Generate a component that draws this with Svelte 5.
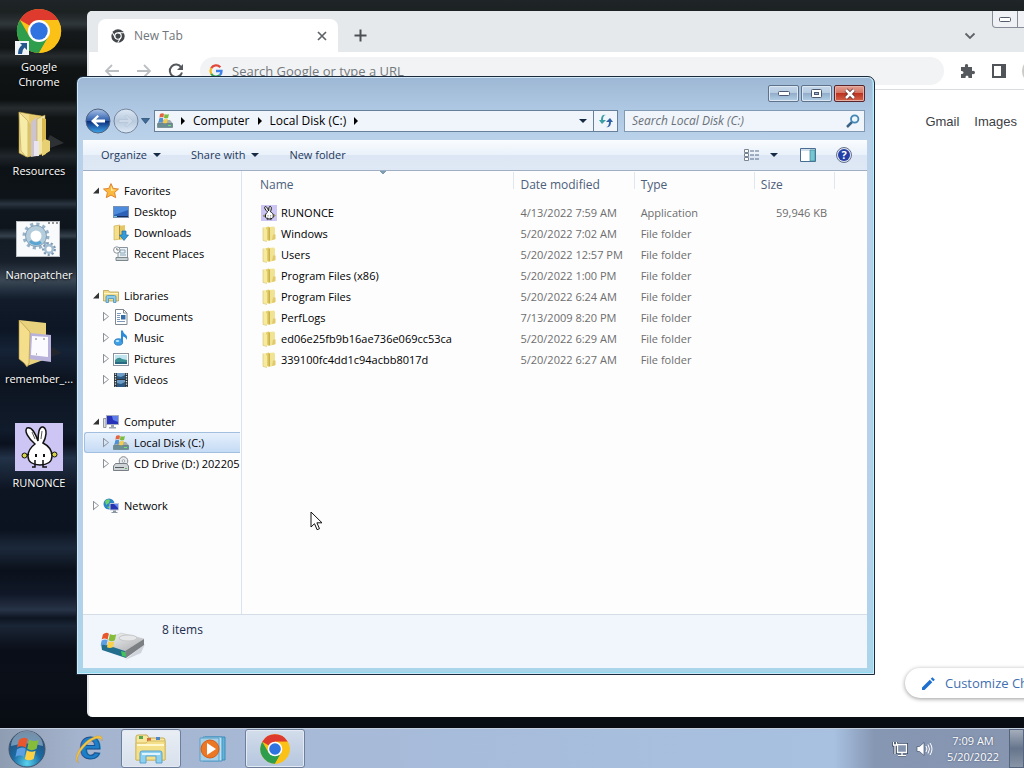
<script lang="ts">
  type Entry = { name: string; date: string; type: string; size?: string; icon: string };
  type Node = { label: string; icon: string; closed?: boolean; selected?: boolean };
  type Group = { label: string; icon: string; closed?: boolean; items: Node[] };

  const shortcuts = [
    { label: 'Google Chrome', icon: 'chrome', link: true },
    { label: 'Resources', icon: 'folder-full' },
    { label: 'Nanopatcher', icon: 'gears' },
    { label: 'remember_...', icon: 'folder-doc' },
    { label: 'RUNONCE', icon: 'bunny' }
  ];

  const groups: Group[] = [
    {
      label: 'Favorites',
      icon: 'star',
      items: [
        { label: 'Desktop', icon: 'desktop' },
        { label: 'Downloads', icon: 'downloads' },
        { label: 'Recent Places', icon: 'recent' }
      ]
    },
    {
      label: 'Libraries',
      icon: 'libraries',
      items: [
        { label: 'Documents', icon: 'document', closed: true },
        { label: 'Music', icon: 'music', closed: true },
        { label: 'Pictures', icon: 'picture', closed: true },
        { label: 'Videos', icon: 'video', closed: true }
      ]
    },
    {
      label: 'Computer',
      icon: 'computer',
      items: [
        { label: 'Local Disk (C:)', icon: 'disk', closed: true, selected: true },
        { label: 'CD Drive (D:) 202205', icon: 'cd', closed: true }
      ]
    },
    { label: 'Network', icon: 'network', closed: true, items: [] }
  ];

  const entries: Entry[] = [
    { name: 'RUNONCE', date: '4/13/2022 7:59 AM', type: 'Application', size: '59,946 KB', icon: 'bunny' },
    { name: 'Windows', date: '5/20/2022 7:02 AM', type: 'File folder', icon: 'folder' },
    { name: 'Users', date: '5/20/2022 12:57 PM', type: 'File folder', icon: 'folder' },
    { name: 'Program Files (x86)', date: '5/20/2022 1:00 PM', type: 'File folder', icon: 'folder' },
    { name: 'Program Files', date: '5/20/2022 6:24 AM', type: 'File folder', icon: 'folder' },
    { name: 'PerfLogs', date: '7/13/2009 8:20 PM', type: 'File folder', icon: 'folder' },
    { name: 'ed06e25fb9b16ae736e069cc53ca', date: '5/20/2022 6:29 AM', type: 'File folder', icon: 'folder' },
    { name: '339100fc4dd1c94acbb8017d', date: '5/20/2022 6:27 AM', type: 'File folder', icon: 'folder' }
  ];

  let search = $state('');
</script>

{#snippet icon(name: string, size: number)}
  {#if name === 'chrome'}
    <svg width={size} height={size} viewBox="0 0 48 48" aria-hidden="true">
      <circle cx="24" cy="24" r="22" fill="#fbc116" />
      <path d="M24 24 4.9 13A22 22 0 0 1 43.1 13H24z" fill="#de3a2e" />
      <path d="M4.9 13A22 22 0 0 0 24 46L33.5 29.5 24 24 14.5 29.5z" fill="#2f9e4c" />
      <path d="M24 13H43.1A22 22 0 0 1 24 46L33.5 29.5z" fill="#fbc116" />
      <circle cx="24" cy="24" r="11" fill="#fff" />
      <circle cx="24" cy="24" r="8.7" fill="#2f73e0" />
    </svg>
  {:else if name === 'folder-full'}
    <svg width={size} height={size} viewBox="0 0 48 48" aria-hidden="true">
      <path d="M27 40l22-8-14-8z" fill="#2d3133" />
      <path d="M4 1l22 4v38l-14 3L4 42z" fill="#f0dc8e" stroke="#a58c38" stroke-width=".6" />
      <path d="M14 4l16 1v38l-14 2z" fill="#e6ca6c" />
      <path d="M16 11l6-5v39l-6 1z" fill="#cdc3cc" />
      <path d="M22 8l8-4v37l-8 4z" fill="#f3e6a4" stroke="#b49b46" stroke-width=".5" />
      <path d="M27 7l4 1v35l-4 2z" fill="#d8b94e" />
      <path d="M19 30h5v15h-5z" fill="#e9e4ef" />
      <path d="M30 28l5 2v10l-8 5V31z" fill="#e7cf73" />
      <path d="M4 1l9 9v36l-3-1-2-3-2-2z" fill="#f7eba8" stroke="#b8a14f" stroke-width=".6" />
      <path d="M13 10l3 4v31l-3 1z" fill="#dcc266" />
    </svg>
  {:else if name === 'folder-doc'}
    <svg width={size} height={size} viewBox="0 0 48 48" aria-hidden="true">
      <path d="M22 43l25-9-10-6z" fill="#22252b" />
      <path d="M4 1l27 3v36l-19 7z" fill="#e9d27d" />
      <path d="M15 14l21 2v27l-22-3z" fill="#b9b3dc" />
      <path d="M17 17l16 1v20l-17-2z" fill="#fbfaff" />
      <path d="M4 1l11 12-1 31-2 4-3-4-5-4z" fill="#f4dd8b" stroke="#a98f3e" stroke-width=".6" />
      <path d="M20 20h2M28 20h2M21 35h1" stroke="#777" />
    </svg>
  {:else if name === 'gears'}
    <svg width={size} height={size} viewBox="0 0 48 48" aria-hidden="true">
      <rect x="1.5" y="6.5" width="43" height="35" fill="#f8fafb" stroke="#b9bcc0" />
      <path d="M33 8h2M37 8h2M41 8h2" stroke="#333" />
      <circle cx="21" cy="21" r="11.5" fill="none" stroke="#98b3c8" stroke-width="4" stroke-dasharray="3 3.02" />
      <circle cx="21" cy="21" r="8" fill="#fff" stroke="#b4cddd" stroke-width="5" />
      <circle cx="21" cy="21" r="10.5" fill="none" stroke="#6f8ca6" stroke-width=".7" />
      <path d="M15 26a8 8 0 0 0 11 1" fill="none" stroke="#5ba5d3" stroke-width="3" />
      <circle cx="34" cy="34" r="5.4" fill="none" stroke="#7d98b2" stroke-width="3" stroke-dasharray="2 1.77" />
      <circle cx="34" cy="34" r="3.8" fill="#fff" stroke="#a3bdd2" stroke-width="2.5" />
    </svg>
  {:else if name === 'bunny'}
    <svg width={size} height={size} viewBox="0 0 48 48" aria-hidden="true">
      <rect width="48" height="48" fill="#cdc5f4" />
      <path d="M20 21C13 15 9 8 12 5c5-2 9 7 11 13 0-7 1-15 5-14 5 2 3 11 0 16 6 3 9 7 9 13s-5 9-12 9-12-3-12-9c0-5 3-9 7-12z" fill="#fff" stroke="#111" stroke-width={size > 20 ? 1.5 : 3} />
      <path d="M17 9l3 7M27 8l-1 8" stroke="#555" />
      <path d="M21 31v3M29 31v3" stroke="#111" stroke-width="2" />
      <path d="M20 37v7h-3M28 37v7h4" fill="none" stroke="#111" stroke-width="1.5" />
      <path d="M14 31l-3 2M36 30l3 2" stroke="#111" stroke-width="1.5" />
      <circle cx="9.5" cy="32.5" r="2.5" fill="#d6d345" stroke="#111" />
      <circle cx="39.5" cy="31.5" r="2.5" fill="#d6d345" stroke="#111" />
    </svg>
  {:else if name === 'folder'}
    <svg width={size} height={size} viewBox="0 0 16 16" aria-hidden="true">
      <path d="M2 1.5l6-1v14l-6 .5z" fill="#f7eeb4" />
      <path d="M5 1.5l3-1v13l-3 1z" fill="#e3cf70" />
      <path d="M8 1l5-.5 1 1v12L8 15z" fill="#f1e394" />
      <path d="M7.500 1.500H9V14l-1.500 1z" fill="#cbb04a" />
      <path d="M2 1.500l4 2V15.500l-4-1z" fill="#f6ea9c" />
      <path d="M12 8.500h2.500v4.500L11 14z" fill="#e2ca6b" />
      <path d="M2 1.500V14.500l4 1" fill="none" stroke="#d5c47a" stroke-width=".6" />
    </svg>
  {:else if name === 'star'}
    <svg width={size} height={size} viewBox="0 0 16 16" aria-hidden="true">
      <path d="M8 .6l2.2 4.8 5.300.6-3.900 3.500 1.100 5.200L8 12.100l-4.700 2.600 1.100-5.200L.5 6l5.300-.6z" fill="#fbb93e" stroke="#d97d28" stroke-width=".9" />
      <path d="M8 3l1.400 3.500L13 7 8 8z" fill="#fff0a6" />
    </svg>
  {:else if name === 'desktop'}
    <svg width={size} height={size} viewBox="0 0 16 16" aria-hidden="true">
      <rect x=".5" y="2.5" width="15" height="11" fill="#2b62b8" stroke="#7790b3" />
      <path d="M1 3h14v3L1 11z" fill="#4d8cdc" />
      <path d="M1 12h14v1H1z" fill="#172d55" />
      <path d="M1 12h3v1H1z" fill="#75c2e4" />
    </svg>
  {:else if name === 'downloads'}
    <svg width={size} height={size} viewBox="0 0 16 16" aria-hidden="true">
      <path d="M1 1l6-1v14l-6 1z" fill="#f3df8c" stroke="#c6a84b" stroke-width=".6" />
      <path d="M6 1l6-1v14l-6 1z" fill="#e5c866" />
      <path d="M6 1h1v13H6z" fill="#b3923a" />
      <path d="M9 6h4v4h2.500L11 15.500 6.500 10H9z" fill="#359bd6" stroke="#1c6ea8" stroke-width=".7" />
    </svg>
  {:else if name === 'recent'}
    <svg width={size} height={size} viewBox="0 0 16 16" aria-hidden="true">
      <path d="M5 1.500h9.500v11H5z" fill="#eef2f5" stroke="#8a949c" />
      <path d="M7 4h5v3H7zM7 9h6" fill="none" stroke="#86a5ba" />
      <path d="M3 11.500h12v3H3z" fill="#cbd2d6" stroke="#7d878e" />
      <circle cx="3.8" cy="4" r="3.2" fill="#fff" stroke="#8a949c" />
      <path d="M3.800 2v2h2" fill="none" stroke="#555" stroke-width=".8" />
    </svg>
  {:else if name === 'libraries'}
    <svg width={size} height={size} viewBox="0 0 16 16" aria-hidden="true">
      <path d="M.5 13V2.500h5l1 1.500h9v9z" fill="#f1dc8b" stroke="#b99f4e" stroke-width=".8" />
      <path d="M1 5.500h14" stroke="#fff5c4" />
      <path d="M3 14.500V9q0-1.500 1.500-1.500h7Q13 7.500 13 9v5.500h-2.500v-4h-5v4z" fill="#8ccbea" stroke="#4d8fb5" stroke-width=".8" />
    </svg>
  {:else if name === 'document'}
    <svg width={size} height={size} viewBox="0 0 16 16" aria-hidden="true">
      <path d="M2.500.5h8l3.500 3.500v11.500H2.500z" fill="#fff" stroke="#7f8890" />
      <path d="M10.500.5V4H14" fill="none" stroke="#7f8890" />
      <path d="M4 4.500h4M4 6.500h3M4 8.500h3M4 10.500h3M4 12.500h8" stroke="#7b98bc" />
      <path d="M8 6h4.500v4.500H8z" fill="#356da8" />
    </svg>
  {:else if name === 'music'}
    <svg width={size} height={size} viewBox="0 0 16 16" aria-hidden="true">
      <ellipse cx="5.5" cy="12" rx="4.2" ry="3.3" fill="#3fa0e4" stroke="#1d6ab2" stroke-width=".7" />
      <path d="M8 .5h1.800q.4 3 3.200 4.500 2 2 .4 5-.2-2.600-3.400-3.500V12H8z" fill="#2d8bd6" />
      <ellipse cx="4.5" cy="11" rx="1.8" ry="1" fill="#c2e8ff" />
    </svg>
  {:else if name === 'picture'}
    <svg width={size} height={size} viewBox="0 0 16 16" aria-hidden="true">
      <rect x=".5" y="2.5" width="15" height="12" fill="#fff" stroke="#8b949c" />
      <path d="M2 4h12v9H2z" fill="#bfe4ef" />
      <path d="M2 9q4-4 7-1l5 1v4H2z" fill="#3b8e92" />
      <path d="M2 11h12v2H2z" fill="#286a83" />
    </svg>
  {:else if name === 'video'}
    <svg width={size} height={size} viewBox="0 0 16 16" aria-hidden="true">
      <path d="M1 1h14v14H1z" fill="#2d3439" />
      <path d="M4 1h8v6H4zM4 8h8v7H4z" fill="#6d9cc8" />
      <path d="M4 4l4 1 4-2v4H4zM4 11l4 1 4-2v5H4z" fill="#2b5885" />
      <path d="M2.500 1.500v13M13.500 1.500v13" stroke="#e8edf0" stroke-width="1.3" stroke-dasharray="1.3 1.2" />
    </svg>
  {:else if name === 'computer'}
    <svg width={size} height={size} viewBox="0 0 16 16" aria-hidden="true">
      <path d="M.5 4.500H3v9H.5z" fill="#d9dde2" stroke="#7c858c" stroke-width=".8" />
      <path d="M3.500 1.500h12v9h-12z" fill="#2633b8" stroke="#a2abc0" />
      <path d="M9 2h6v6l-5-2z" fill="#5e7bea" />
      <path d="M8 11h3v2h2v1.500H6V13h2z" fill="#9aa3ae" />
    </svg>
  {:else if name === 'disk'}
    <svg width={size} height={size} viewBox="0 0 16 16" aria-hidden="true">
      <path d="M1 9l2-2h10l2.500 3v4H1z" fill="#a3adaf" />
      <path d="M.5 10.500h15v4H.5z" fill="#6b8d94" stroke="#5b757b" stroke-width=".6" />
      <path d="M11 12.500h3" stroke="#71e071" />
      <path d="M3 1q2-1.500 4-.3L6.400 4.500q-2-1-4 .2z" fill="#e2653f" />
      <path d="M7.500 1q2 1.200 4.500 0L11 5q-2 .8-4 0z" fill="#7bbb3d" />
      <path d="M2.200 5.500q2-1.200 4-.2L5.500 9.500q-2-1-4 .2z" fill="#4d91d8" />
      <path d="M6.700 5.700q2 1 4.200.1L10 10q-2 .7-4 0z" fill="#f5cd4c" />
    </svg>
  {:else if name === 'cd'}
    <svg width={size} height={size} viewBox="0 0 16 16" aria-hidden="true">
      <circle cx="10.5" cy="5" r="4.3" fill="#e8ebed" stroke="#82898f" />
      <circle cx="10.5" cy="5" r="1.3" fill="#fff" stroke="#82898f" stroke-width=".7" />
      <path d="M.5 10l2-2.500h11l2 2.500v4.500H.5z" fill="#cfd4d7" stroke="#6c7378" stroke-width=".9" />
      <path d="M2 11.500h9" stroke="#555c61" />
      <path d="M12 12.500h2" stroke="#67b567" />
    </svg>
  {:else if name === 'network'}
    <svg width={size} height={size} viewBox="0 0 16 16" aria-hidden="true">
      <circle cx="6" cy="6" r="5.5" fill="#2c85c5" />
      <path d="M2 3q3-3 5-1L6 5 3 7zM4 9l4-1-1 3z" fill="#6ed068" />
      <path d="M7 5.500h8.500v6.500H7z" fill="#2535b0" stroke="#bfc8d8" />
      <path d="M11 6h4v4z" fill="#6a87ef" />
      <path d="M10 12.500h3v1.500h1.500v1H8.500v-1H10z" fill="#8d97a4" />
    </svg>
  {/if}
{/snippet}

{#snippet flag()}
  <path d="M3 5q5-4 9-1l-2 9q-5-3-9 0z" fill="#e6572d" />
  <path d="M13.500 4.500q5 3 9.500.5l-2 9q-5 3-9.500 0z" fill="#85bd3b" />
  <path d="M1 14.500q5-3 9-.5l-2 8.500q-4-3-8.500 0z" fill="#5c9fe2" />
  <path d="M11 15.500q5 3 9 .5l-2 8.500q-5 2.500-9 0z" fill="#fbd045" />
{/snippet}

<div class="screen">
  <main class="desktop">
    <ul class="shortcuts">
      {#each shortcuts as item}
        <li>
          <button class="shortcut">
            <span class="shortcut-icon">
              {@render icon(item.icon, 48)}
              {#if item.link}
                <svg class="link-badge" width="14" height="14" viewBox="0 0 14 14" aria-hidden="true">
                  <path d="M0 0h14v14H0z" fill="#f2f5f8" />
                  <path d="M5 2h7v7L9.500 6.500Q7 9 7 13H3q0-6 4-9z" fill="#25588f" />
                </svg>
              {/if}
            </span>
            {item.label}
          </button>
        </li>
      {/each}
    </ul>

    <section class="browser" aria-label="New Tab">
      <div class="tab-strip">
        <div class="tab">
          <svg width="14" height="14" viewBox="0 0 48 48" aria-hidden="true">
            <circle cx="24" cy="24" r="23" fill="#42464a" />
            <circle cx="24" cy="24" r="11" fill="none" stroke="#fff" stroke-width="4" />
            <path d="M24 13h21M33.500 29.500L23 47M14.500 29.500L4 11" stroke="#fff" stroke-width="3.5" />
          </svg>
          <span class="tab-title">New Tab</span>
          <button class="bare" aria-label="Close tab">
            <svg width="10" height="10" viewBox="0 0 10 10"><path d="M1 1l8 8M9 1L1 9" stroke="#5f6368" stroke-width="1.7" /></svg>
          </button>
        </div>
        <button class="bare strip-btn" aria-label="New tab">
          <svg width="13" height="13" viewBox="0 0 13 13"><path d="M6.500.5v12M.5 6.500h12" stroke="#4c5054" stroke-width="2" /></svg>
        </button>
        <button class="bare strip-btn tab-search" aria-label="Search tabs">
          <svg width="12" height="8" viewBox="0 0 12 8"><path d="M1.500 1.500L6 6l4.500-4.500" fill="none" stroke="#5f6368" stroke-width="1.8" /></svg>
        </button>
        <button class="browser-min" aria-label="Minimize browser">
          <svg width="12" height="5" viewBox="0 0 12 5"><rect x=".5" y=".5" width="11" height="4" rx="1" fill="#fff" stroke="#555d6b" /></svg>
        </button>
      </div>
      <div class="browser-bar">
        <button class="bare" aria-label="Back">
          <svg width="16" height="14" viewBox="0 0 16 14"><path d="M15 7H2M8 1L2 7l6 6" fill="none" stroke="#bcbfc2" stroke-width="1.8" /></svg>
        </button>
        <button class="bare" aria-label="Forward">
          <svg width="16" height="14" viewBox="0 0 16 14"><path d="M1 7h13M8 1l6 6-6 6" fill="none" stroke="#bcbfc2" stroke-width="1.8" /></svg>
        </button>
        <button class="bare" aria-label="Reload">
          <svg width="16" height="16" viewBox="0 0 16 16"><path d="M13.300 4.500A6.200 6.200 0 1 0 14 9.500" fill="none" stroke="#55595d" stroke-width="2" /><path d="M15 1v6H9z" fill="#55595d" /></svg>
        </button>
        <div class="omnibox">
          <svg width="14" height="14" viewBox="0 0 14 14" fill="none" stroke-width="2.3" aria-hidden="true">
            <path d="M11.300 3.200A5.600 5.600 0 0 0 2.200 4.300" stroke="#e2473b" />
            <path d="M2.200 4.300a5.600 5.600 0 0 0 0 5.400" stroke="#f4b91d" />
            <path d="M2.200 9.700a5.600 5.600 0 0 0 8.600 1.500" stroke="#3ba255" />
            <path d="M10.800 11.200Q12.600 9.500 12.500 7H7" stroke="#4080ea" />
          </svg>
          <input type="text" aria-label="Address and search bar" placeholder="Search Google or type a URL" />
        </div>
        <button class="bare" aria-label="Extensions">
          <svg width="16" height="16" viewBox="0 0 16 16"><path d="M1 4h4q-.6-3 1.500-3T8 4h4v4q3-.6 3 1.500T12 11v4H8.500q.3-2.500-1.500-2.500T5.500 15H1v-4q2.500.3 2.500-1.500T1 8z" fill="#55595d" /></svg>
        </button>
        <button class="bare" aria-label="Side panel">
          <svg width="14" height="14" viewBox="0 0 14 14"><path d="M1 1h12v12H1z" fill="#fff" stroke="#505458" stroke-width="2" /><path d="M9 1h4v12H9z" fill="#505458" /></svg>
        </button>
        <span class="avatar"></span>
      </div>
      <nav class="google-links">
        <a href="#gmail">Gmail</a>
        <a href="#images">Images</a>
      </nav>
      <button class="customize">
        <svg width="13" height="13" viewBox="0 0 13 13" aria-hidden="true"><path d="M0 10.500L7.800 2.700l2.500 2.500L2.500 13H0zM8.700 1.800L10.400.2l2.500 2.500-1.700 1.600z" fill="#1f6fd0" /></svg>
        Customize Chrome
      </button>
    </section>

    <section class="explorer" aria-label="Local Disk (C:)">
      <header class="title-bar">
        <button class="win-btn" aria-label="Minimize">
          <svg width="12" height="5" viewBox="0 0 12 5"><rect x=".5" y=".5" width="11" height="4" rx="1" fill="#fff" stroke="#4b5a70" /></svg>
        </button>
        <button class="win-btn" aria-label="Maximize">
          <svg width="11" height="9" viewBox="0 0 11 9"><rect x=".5" y=".5" width="10" height="8" rx="1" fill="#fff" stroke="#4b5a70" /><rect x="3.5" y="3.5" width="4" height="2" fill="#9db6d0" stroke="#4b5a70" /></svg>
        </button>
        <button class="win-btn close" aria-label="Close">
          <svg width="12" height="10" viewBox="0 0 12 10"><path d="M2 1l8 8M10 1L2 9" stroke="#5a2a2a" stroke-width="4" /><path d="M2 1l8 8M10 1L2 9" stroke="#fff" stroke-width="2.5" /></svg>
        </button>
      </header>

      <div class="nav-bar">
        <div class="history">
          <button class="orb" aria-label="Back">
            <svg width="26" height="26" viewBox="0 0 26 26">
              <defs>
                <linearGradient id="back" x2="0" y2="1"><stop stop-color="#a9c2e6" /><stop offset=".48" stop-color="#2f5fae" /><stop offset=".52" stop-color="#0c2f80" /><stop offset="1" stop-color="#3fa6ea" /></linearGradient>
              </defs>
              <circle cx="13" cy="13" r="12" fill="url(#back)" stroke="#51617c" />
              <path d="M6 13l6.500-6 1.500 1.500-3 3H20v3h-9l3 3-1.500 1.500z" fill="#fff" />
            </svg>
          </button>
          <button class="orb" aria-label="Forward">
            <svg width="26" height="26" viewBox="0 0 26 26">
              <defs>
                <linearGradient id="fwd" x2="0" y2="1"><stop stop-color="#dce7f3" /><stop offset=".5" stop-color="#b8cade" /><stop offset="1" stop-color="#dbe8f5" /></linearGradient>
              </defs>
              <circle cx="13" cy="13" r="12" fill="url(#fwd)" stroke="#76869c" />
              <path d="M20 13l-6.500-6-1.500 1.500 3 3H6v3h9l-3 3 1.500 1.500z" fill="#cbd9e8" stroke="#b0c0d3" stroke-width=".6" />
            </svg>
          </button>
          <button class="bare" aria-label="Recent pages">
            <svg width="9" height="6" viewBox="0 0 9 6"><path d="M.5.5h8l-4 5z" fill="#3f6b99" stroke="#24476e" stroke-width=".7" /></svg>
          </button>
        </div>
        <div class="address">
          {@render icon('disk', 16)}
          <span class="chevron"></span>
          <button class="bare crumb">Computer</button>
          <span class="chevron"></span>
          <button class="bare crumb">Local Disk (C:)</button>
          <span class="chevron"></span>
          <button class="bare previous" aria-label="Previous locations"><span class="caret"></span></button>
          <button class="refresh" aria-label="Refresh">
            <svg width="14" height="14" viewBox="0 0 14 14">
              <path d="M7 1Q4 1 4 6H7L3 10 0 6h2Q2 0 7 1z" fill="#3a9ea5" />
              <path d="M7 13q3 0 3-5H7l4-4 3 4h-2q0 6-5 5z" fill="#2f62a5" />
            </svg>
          </button>
        </div>
        <div class="search">
          <input type="search" aria-label="Search Local Disk (C:)" placeholder="Search Local Disk (C:)" bind:value={search} />
          <svg width="14" height="14" viewBox="0 0 14 14" fill="none" aria-hidden="true">
            <path d="M1 13l5-5" stroke="#3b6287" stroke-width="2.5" />
            <circle cx="8.7" cy="5" r="3.7" fill="#eef7fd" stroke="#4486b5" stroke-width="1.8" />
          </svg>
        </div>
      </div>

      <div class="client">
        <div class="toolbar">
          <button class="bare">Organize <span class="caret"></span></button>
          <button class="bare">Share with <span class="caret"></span></button>
          <button class="bare">New folder</button>
          <div class="view-tools">
            <button class="bare view-mode" aria-label="Change your view">
              <svg width="16" height="13" viewBox="0 0 16 13">
                <path d="M.5.5h4v3h-4zM.5 4.500h4v3h-4zM.5 8.500h4v3h-4z" fill="#fff" stroke="#7b8694" />
                <path d="M6 2h4M11 2h4M6 6h4M11 6h4M6 10h4M11 10h4" stroke="#596c88" />
              </svg>
              <span class="caret"></span>
            </button>
            <button class="bare" aria-label="Show the preview pane">
              <svg width="16" height="14" viewBox="0 0 16 14">
                <path d="M.5.5h15v13H.5z" fill="#fff" stroke="#4a6d94" />
                <path d="M1 2h14" stroke="#a7c0d8" />
                <path d="M10 2h5v11h-5z" fill="#75c6d2" stroke="#3e8a9a" stroke-width=".7" />
              </svg>
            </button>
            <button class="bare" aria-label="Get help">
              <svg width="16" height="16" viewBox="0 0 16 16">
                <circle cx="8" cy="8" r="7.5" fill="#dfe4ef" stroke="#66738e" />
                <circle cx="8" cy="8" r="6" fill="#243fa6" />
                <text x="8" y="12" class="help-mark">?</text>
              </svg>
            </button>
          </div>
        </div>

        <div class="panes">
          <nav class="tree" aria-label="Folders">
            {#each groups as group}
              <ul>
                <li class="node root">
                  <span class={group.closed ? 'twist closed' : 'twist open'}></span>
                  {@render icon(group.icon, 16)}
                  <a href="#{group.icon}">{group.label}</a>
                </li>
                {#each group.items as item}
                  <li class="node" class:selected={item.selected}>
                    <span class="twist" class:closed={item.closed}></span>
                    {@render icon(item.icon, 16)}
                    <a href="#{item.icon}">{item.label}</a>
                  </li>
                {/each}
              </ul>
            {/each}
          </nav>

          <div class="files">
            <table>
              <thead>
                <tr>
                  <th class="col-name sorted" scope="col">Name</th>
                  <th class="col-date" scope="col">Date modified</th>
                  <th class="col-date" scope="col">Type</th>
                  <th class="col-size" scope="col">Size</th>
                </tr>
              </thead>
              <tbody>
                {#each entries as entry}
                  <tr>
                    <td><span class="file">{@render icon(entry.icon, 16)}{entry.name}</span></td>
                    <td>{entry.date}</td>
                    <td>{entry.type}</td>
                    <td class="size">{entry.size ?? ''}</td>
                  </tr>
                {/each}
              </tbody>
            </table>
          </div>
        </div>

        <footer class="details">
          <svg width="48" height="32" viewBox="0 0 48 32" aria-hidden="true">
            <defs>
              <linearGradient id="drive" x2="1" y2="1"><stop stop-color="#fafafa" /><stop offset="1" stop-color="#a9acaf" /></linearGradient>
            </defs>
            <path d="M4 22l22 9 20-16-4 9-16 7z" fill="#b9bdc5" opacity=".6" />
            <path d="M2 14L22 4l23 6-19 12z" fill="url(#drive)" stroke="#c6c8ca" stroke-width=".6" />
            <path d="M26 22l19-12v6L27 29z" fill="#7c8083" />
            <path d="M2 14l24 8 1 7-24-8z" fill="#226e8c" />
            <path d="M22 22l4 1 1 5-4-1z" fill="#41c455" />
            <ellipse cx="29" cy="9" rx="9" ry="3" fill="#e6e7e8" stroke="#c5c7c9" />
            <g transform="translate(2 2) scale(.66)">{@render flag()}</g>
          </svg>
          <span>8 items</span>
        </footer>
      </div>
    </section>

    <svg class="cursor" width="13" height="20" viewBox="0 0 13 20" aria-hidden="true">
      <path d="M1 1v15l3.500-3.300 2.600 6 2.400-1-2.600-5.900H12z" fill="#fff" stroke="#111" />
    </svg>
  </main>

  <footer class="taskbar">
    <button class="start" aria-label="Start">
      <svg width="40" height="40" viewBox="0 0 40 40">
        <defs>
          <radialGradient id="orb" cy=".9" r=".9"><stop stop-color="#58d3ee" /><stop offset=".45" stop-color="#1b6aa3" /><stop offset="1" stop-color="#27476b" /></radialGradient>
        </defs>
        <circle cx="20" cy="20" r="18" fill="url(#orb)" stroke="#41536b" />
        <path d="M4 17a16 15 0 0 1 32 0q-16-5-32 0z" fill="#d5e2ed" opacity=".45" />
        <g transform="translate(9 6) scale(.98)">{@render flag()}</g>
      </svg>
    </button>
    <button class="task" aria-label="Internet Explorer">
      <svg width="34" height="34" viewBox="0 0 34 34">
        <text x="18" y="27" class="ie-mark">e</text>
        <path d="M7 31C-2 28 11 7 25 4q6-1 5 5-.5-4-7-2C13 11 1 27 7 31z" fill="#f2c546" stroke="#c9922a" stroke-width=".4" />
      </svg>
    </button>
    <button class="task active front" aria-label="Windows Explorer">
      <svg width="36" height="34" viewBox="0 0 36 34">
        <path d="M3 28V5q0-2 2-2h9l2 3h14q2 0 2 2v20z" fill="#f7e69b" stroke="#c5aa55" />
        <path d="M6 4h4v3H6z" fill="#55a64e" />
        <path d="M14 6h4v3h-4z" fill="#d76d3c" />
        <path d="M23 5h4v3h-4z" fill="#4e86c8" />
        <path d="M3 11h10l2-2h17v19H3z" fill="#f5e08a" stroke="#d6bc64" />
        <path d="M4 13h27" stroke="#fff7cd" stroke-width="2" />
        <path d="M7 31V21q0-2 2-2h18q2 0 2 2v10h-6v-7H13v7z" fill="#8ed0ef" stroke="#5aa2cc" />
        <path d="M9 22h18" stroke="#dff4fd" stroke-width="2" />
      </svg>
    </button>
    <button class="task" aria-label="Windows Media Player">
      <svg width="30" height="28" viewBox="0 0 30 28">
        <path d="M7 2h20v23H7z" fill="#61b3da" stroke="#3d8bb9" />
        <path d="M5 2h19v24H5z" fill="#b9e0f2" stroke="#4394c1" />
        <path d="M2 3h19v23H2z" fill="#a6d0e8" stroke="#5b9fc9" />
        <circle cx="12" cy="14" r="9" fill="#ec7725" stroke="#d65d17" />
        <path d="M9 8l9 6-9 6z" fill="#fff" />
      </svg>
    </button>
    <button class="task active" aria-label="Google Chrome">{@render icon('chrome', 32)}</button>

    <div class="tray">
      <svg width="16" height="16" viewBox="0 0 16 16" fill="none" role="img" aria-label="Network">
        <path d="M5.500 3.500h9v8h-9zM10 12v2M6 14.500h8M1.500 1v3h3V1M3 4v9" stroke="#3a4a63" stroke-width="3" />
        <path d="M5.500 3.500h9v8h-9z" fill="#8494ae" />
        <path d="M5.500 3.500h9v8h-9zM10 12v2M6 14.500h8M1.500 1v3h3V1M3 4v9" stroke="#fff" stroke-width="1.3" />
      </svg>
      <svg width="16" height="16" viewBox="0 0 16 16" fill="none" role="img" aria-label="Volume">
        <path d="M1 5.500h2.500L8 1.500v13l-4.500-4H1z" fill="#fff" stroke="#42536e" stroke-width=".7" />
        <path d="M10 5q2 3 0 6M12 3.500q3 4.500 0 9M14 2q4 6 0 12" stroke="#fff" />
      </svg>
      <time datetime="2022-05-20T07:09">7:09 AM<br />5/20/2022</time>
    </div>
    <button class="show-desktop" aria-label="Show desktop"></button>
  </footer>
</div>

<style>
  :global(body) {
    margin: 0;
    overflow: hidden;
  }
  .screen {
    display: flex;
    flex-direction: column;
    height: 100vh;
    font-family: 'Open Sans', 'Noto Sans', sans-serif;
    font-size: 11px;
    line-height: 16px;
    color: #000;
  }
  button,
  input {
    font: inherit;
    color: inherit;
  }
  svg {
    display: block;
    flex: none;
    overflow: visible;
  }
  ul {
    list-style: none;
    margin: 0;
    padding: 0;
  }
  a {
    color: inherit;
    text-decoration: none;
  }
  .bare {
    display: flex;
    align-items: center;
    padding: 0;
    border: 0;
    background: none;
    white-space: nowrap;
  }

  .desktop {
    position: relative;
    flex: 1;
    overflow: hidden;
    background: linear-gradient(
      #1f2528 0, #1c2122 12px, #30373a 24px, #15191b 32px, #111516 48px, #262b2e 56px, #101415 68px,
      #0d1112 100px, #272c2f 108px, #101415 118px, #0e1214 146px, #20262b 156px, #0d1216 168px,
      #0e1319 198px, #2a3541 204px, #10171f 210px, #0d141c 228px, #35414c 236px, #131b24 240px,
      #17202b 262px, #3c4855 280px, #283544 288px, #111b2a 300px, #0d1624 330px, #152337 350px,
      #0d1420 380px, #101b2b 430px, #0b111e 444px, #223248 458px, #0d1422 490px, #0c1320 530px,
      #1c293b 548px, #0b111b 570px, #101827 594px, #273347 610px, #0e1521 618px, #1a2535 626px,
      #0a0e18 650px, #0a0f18 690px, #080c12 728px
    );
  }
  .shortcuts {
    width: 78px;
  }
  .shortcuts li {
    height: 104px;
  }
  .shortcut {
    display: flex;
    flex-direction: column;
    align-items: center;
    gap: 4px;
    width: 78px;
    padding: 7px 2px 0;
    border: 0;
    background: none;
    color: #fff;
    line-height: 15px;
    text-shadow: 0 1px 2px #000;
  }
  .shortcut-icon {
    position: relative;
  }
  .link-badge {
    position: absolute;
    left: 0;
    bottom: 0;
  }

  .browser {
    position: absolute;
    top: 11px;
    right: -80px;
    bottom: 11px;
    left: 87px;
    display: flex;
    flex-direction: column;
    border-radius: 5px;
    background: #fff;
    overflow: hidden;
    border-left: 2px solid #e6e9ec;
    font-size: 12px;
  }
  .tab-strip {
    display: flex;
    align-items: flex-end;
    gap: 16px;
    height: 41px;
    padding: 0 59px 0 9px;
    background: #e6e9ec;
  }
  .tab {
    display: flex;
    align-items: center;
    gap: 9px;
    box-sizing: border-box;
    width: 240px;
    height: 33px;
    padding: 0 11px 0 13px;
    border-radius: 8px 8px 0 0;
    background: #fff;
  }
  .tab-title {
    flex: 1;
    color: #70757a;
  }
  .strip-btn {
    height: 33px;
  }
  .tab-search {
    margin-left: auto;
  }
  .browser-min {
    align-self: flex-start;
    display: flex;
    align-items: center;
    justify-content: center;
    width: 53px;
    height: 17px;
    padding: 0 28px 0 0;
    border: 1px solid #868d98;
    border-top: 0;
    border-radius: 0 0 4px 4px;
    background: linear-gradient(90deg, #eff1f5 24px, #868d98 24px, #868d98 25px, #eff1f5 25px);
  }
  .browser-bar {
    display: flex;
    align-items: center;
    gap: 16px;
    height: 37px;
    padding: 0 56px 0 15px;
    border-bottom: 1px solid #dadce0;
    background: #fff;
  }
  .omnibox {
    display: flex;
    align-items: center;
    gap: 9px;
    flex: 1;
    height: 28px;
    padding-left: 9px;
    border-radius: 14px;
    background: #f1f3f4;
  }
  .omnibox input {
    flex: 1;
    padding: 0;
    border: 0;
    background: none;
    font-size: 13px;
  }
  .omnibox input::placeholder {
    color: #75797d;
    opacity: 1;
  }
  .avatar {
    width: 26px;
    height: 26px;
    border-radius: 50%;
    background: #c9cbc6;
  }
  .google-links {
    display: flex;
    justify-content: flex-end;
    gap: 15px;
    padding: 24px 87px 0 0;
    font-family: 'Liberation Sans', Arial, sans-serif;
    font-size: 13px;
    color: #3c4043;
  }
  .customize {
    position: absolute;
    right: 16px;
    bottom: 19px;
    display: flex;
    align-items: center;
    gap: 10px;
    box-sizing: border-box;
    width: 183px;
    height: 30px;
    padding: 0 17px;
    border: 0;
    border-radius: 15px;
    background: #fff;
    box-shadow: 0 1px 4px rgba(0, 0, 0, 0.4);
    color: #3f6fae;
    font-size: 13px;
    white-space: nowrap;
  }

  .explorer {
    position: absolute;
    top: 76px;
    right: 149px;
    bottom: 53px;
    left: 76px;
    display: flex;
    flex-direction: column;
    padding: 0 7px 6px 6px;
    border: 1px solid #1b2a3c;
    border-radius: 7px 7px 0 0;
    background: linear-gradient(#9db8d4, #adc6e1 30px, #bad1ea 60px, #b6d0ea 80%, #a9d5ea);
    box-shadow: inset 0 0 0 1px #d3e8f6, inset -1px -1px 0 1px #8fdcf0;
  }
  .title-bar {
    display: flex;
    justify-content: flex-end;
    gap: 2px;
    padding: 8px 2px 8px 0;
  }
  .win-btn {
    display: flex;
    align-items: center;
    justify-content: center;
    width: 31px;
    height: 17px;
    padding: 0;
    border: 1px solid #5e728c;
    border-radius: 2px;
    background: linear-gradient(#c6d8ea, #b6cbe0 50%, #93aecb 50%, #b4cfe6);
    box-shadow: inset 0 0 0 1px #dbe7f2;
  }
  .close {
    border-color: #59252a;
    background: linear-gradient(#e3a193, #d3705f 50%, #bb3220 50%, #d4644a);
    box-shadow: inset 0 0 0 1px #e7b0a4;
  }
  .nav-bar {
    display: flex;
    align-items: center;
    height: 22px;
    padding: 0 2px 8px 0;
  }
  .history {
    display: flex;
    align-items: center;
    gap: 2px;
    width: 69px;
    padding-left: 2px;
  }
  .orb {
    padding: 0;
    border: 0;
    border-radius: 50%;
    background: none;
  }
  .address {
    display: flex;
    align-items: center;
    flex: 1;
    height: 20px;
    padding-left: 2px;
    border: 1px solid #667f9b;
    background: #f0f5fb;
    font-size: 12px;
  }
  .chevron {
    width: 0;
    margin: 0 8px;
    border: 4px solid transparent;
    border-right: 0;
    border-left-color: #000;
  }
  .previous {
    margin-left: auto;
    padding: 0 6px;
  }
  .caret {
    display: inline-block;
    border: 4px solid transparent;
    border-bottom: 0;
    border-top-color: #172a44;
  }
  .refresh {
    display: flex;
    align-items: center;
    justify-content: center;
    width: 24px;
    height: 20px;
    padding: 0;
    border: 0;
    border-left: 1px solid #667f9b;
    background: none;
  }
  .search {
    display: flex;
    align-items: center;
    width: 228px;
    height: 20px;
    margin-left: 6px;
    padding: 0 4px 0 7px;
    border: 1px solid #8299b3;
    background: #eff5fb;
    font-size: 12px;
  }
  .search input {
    flex: 1;
    min-width: 0;
    padding: 0;
    border: 0;
    background: none;
    outline: none;
    appearance: none;
  }
  .search input::placeholder {
    color: #6b7078;
    font-style: italic;
    opacity: 1;
  }

  .client {
    display: flex;
    flex-direction: column;
    flex: 1;
    min-height: 0;
    background: #fdfdfe;
  }
  .toolbar {
    display: flex;
    align-items: center;
    gap: 30px;
    height: 30px;
    padding: 0 15px 0 18px;
    border-bottom: 1px solid #a0afc3;
    background: linear-gradient(#fafcfe, #e9f1fa 50%, #dce6f4 50%, #dfe9f5);
    color: #1e395b;
  }
  .toolbar .caret {
    margin-left: 6px;
  }
  .view-tools {
    display: flex;
    align-items: center;
    gap: 20px;
    margin-left: auto;
  }
  .view-mode {
    gap: 4px;
    padding-right: 2px;
  }
  .help-mark {
    font-size: 11px;
    font-weight: 700;
    fill: #fff;
    text-anchor: middle;
  }
  .panes {
    display: flex;
    flex: 1;
    min-height: 0;
  }
  .tree {
    display: flex;
    flex-direction: column;
    gap: 21px;
    box-sizing: border-box;
    width: 159px;
    padding: 9px 1px 0 1px;
    border-right: 1px solid #d9e3f1;
    overflow: hidden;
  }
  .node {
    display: flex;
    align-items: center;
    box-sizing: border-box;
    height: 21px;
    padding-left: 19px;
    white-space: nowrap;
  }
  .root {
    padding-left: 9px;
  }
  .node a {
    margin-left: 5px;
  }
  .selected {
    border: 1px solid #a3bfdf;
    border-right: 0;
    border-radius: 3px 0 0 3px;
    padding-left: 18px;
    background: linear-gradient(#e6f0fc, #c5dbf5);
  }
  .twist {
    flex: none;
    width: 10px;
    height: 10px;
  }
  .open {
    background: #333;
    clip-path: polygon(6px 2px, 6px 8px, 0 8px);
  }
  .closed {
    background: #8c9196;
    clip-path: polygon(evenodd, 0 0, 6px 5px, 0 10px, 0 0, 1px 2px, 1px 8px, 5px 5px, 1px 2px);
  }
  .files {
    flex: 1;
    min-width: 0;
    padding-left: 13px;
  }
  table {
    table-layout: fixed;
    width: 580px;
    border-collapse: collapse;
  }
  th {
    height: 21px;
    padding: 3px 6px 7px;
    background: linear-gradient(#dfe6ee, #dfe6ee) right 1px / 1px 17px no-repeat;
    font-size: 12px;
    font-weight: 400;
    text-align: left;
    color: #4c607a;
  }
  .col-name {
    width: 248px;
    padding-left: 5px;
  }
  .sorted {
    background:
      linear-gradient(to bottom left, #7d9db0 50%, transparent 50%) 124px 0 / 4px 4px no-repeat,
      linear-gradient(to bottom right, #7d9db0 50%, transparent 50%) 128px 0 / 4px 4px no-repeat,
      linear-gradient(#dfe6ee, #dfe6ee) right 1px / 1px 17px no-repeat;
  }
  .col-date {
    width: 108px;
  }
  .col-size {
    width: 68px;
  }
  td {
    height: 21px;
    padding: 0 6px;
    color: #6d6d6d;
    white-space: nowrap;
  }
  .file {
    display: flex;
    align-items: center;
    gap: 4px;
    color: #000;
  }
  .size {
    padding-right: 8px;
    text-align: right;
  }
  .details {
    display: flex;
    gap: 15px;
    box-sizing: border-box;
    height: 54px;
    padding: 7px 16px;
    border-top: 1px solid #d5dde7;
    background: #f1f5fc;
    color: #1e2f4d;
    font-size: 12px;
  }
  .details svg {
    margin-top: 7px;
  }
  .cursor {
    position: absolute;
    left: 310px;
    top: 511px;
  }

  .taskbar {
    display: flex;
    align-items: stretch;
    box-sizing: border-box;
    height: 40px;
    border-top: 1px solid #c3cfdf;
    background: linear-gradient(90deg, #8f9db2, #a5b4ce 80px, #a7bad8 320px, #a8c1e1 calc(100% - 190px), #8697b3 calc(100% - 150px), #8795b0);
  }
  .start {
    width: 59px;
    padding: 0 0 0 7px;
    border: 0;
    background: none;
  }
  .task {
    display: flex;
    align-items: center;
    justify-content: center;
    box-sizing: border-box;
    width: 60px;
    margin-right: 2px;
    padding: 0;
    border: 1px solid transparent;
    border-radius: 3px;
    background: none;
  }
  .active {
    border-color: #6d7f9b;
    background: linear-gradient(#d3ddeb, #b5c6de);
    box-shadow: inset 0 0 0 1px #e3eaf4;
  }
  .front {
    background: linear-gradient(#e9eef4, #d7e0ec);
  }
  .ie-mark {
    font-family: 'Liberation Sans', Arial, sans-serif;
    font-size: 40px;
    font-weight: 700;
    fill: #1e7fc9;
    stroke: #15528f;
    text-anchor: middle;
  }
  .tray {
    display: flex;
    align-items: center;
    gap: 8px;
    margin-left: auto;
    padding-right: 3px;
    color: #fff;
    text-align: center;
    text-shadow: 0 0 2px #44536e;
  }
  .tray time {
    min-width: 66px;
  }
  .show-desktop {
    width: 15px;
    padding: 0;
    border: 1px solid #56657e;
    background: linear-gradient(#a4adbb, #66758c 50%, #8995a7);
  }
</style>
